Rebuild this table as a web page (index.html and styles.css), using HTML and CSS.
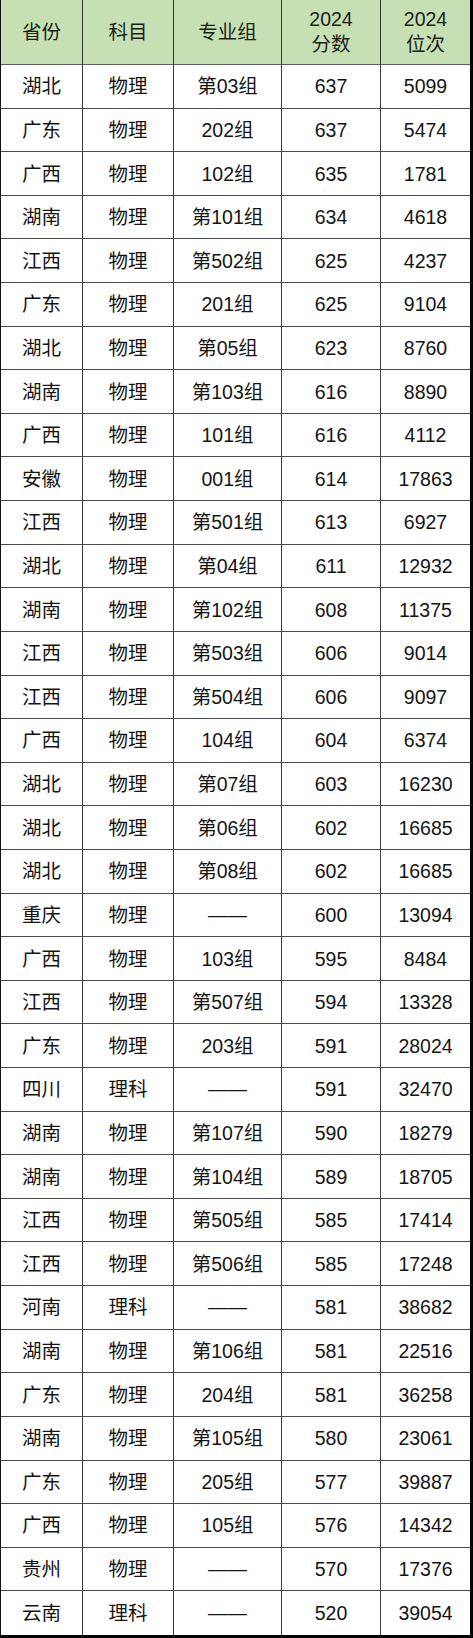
FILE: index.html
```html
<!DOCTYPE html>
<html lang="zh-CN">
<head>
<meta charset="utf-8">
<title>2024 分数位次</title>
<link rel="stylesheet" href="styles.css">
</head>
<body>
<div class="sheet">
  <div class="cell head">省份</div><div class="cell head">科目</div><div class="cell head">专业组</div><div class="cell head">2024<br>分数</div><div class="cell head last">2024<br>位次</div>
  <div class="cell">湖北</div><div class="cell">物理</div><div class="cell">第03组</div><div class="cell">637</div><div class="cell last">5099</div>
  <div class="cell">广东</div><div class="cell">物理</div><div class="cell">202组</div><div class="cell">637</div><div class="cell last">5474</div>
  <div class="cell">广西</div><div class="cell">物理</div><div class="cell">102组</div><div class="cell">635</div><div class="cell last">1781</div>
  <div class="cell">湖南</div><div class="cell">物理</div><div class="cell">第101组</div><div class="cell">634</div><div class="cell last">4618</div>
  <div class="cell">江西</div><div class="cell">物理</div><div class="cell">第502组</div><div class="cell">625</div><div class="cell last">4237</div>
  <div class="cell">广东</div><div class="cell">物理</div><div class="cell">201组</div><div class="cell">625</div><div class="cell last">9104</div>
  <div class="cell">湖北</div><div class="cell">物理</div><div class="cell">第05组</div><div class="cell">623</div><div class="cell last">8760</div>
  <div class="cell">湖南</div><div class="cell">物理</div><div class="cell">第103组</div><div class="cell">616</div><div class="cell last">8890</div>
  <div class="cell">广西</div><div class="cell">物理</div><div class="cell">101组</div><div class="cell">616</div><div class="cell last">4112</div>
  <div class="cell">安徽</div><div class="cell">物理</div><div class="cell">001组</div><div class="cell">614</div><div class="cell last">17863</div>
  <div class="cell">江西</div><div class="cell">物理</div><div class="cell">第501组</div><div class="cell">613</div><div class="cell last">6927</div>
  <div class="cell">湖北</div><div class="cell">物理</div><div class="cell">第04组</div><div class="cell">611</div><div class="cell last">12932</div>
  <div class="cell">湖南</div><div class="cell">物理</div><div class="cell">第102组</div><div class="cell">608</div><div class="cell last">11375</div>
  <div class="cell">江西</div><div class="cell">物理</div><div class="cell">第503组</div><div class="cell">606</div><div class="cell last">9014</div>
  <div class="cell">江西</div><div class="cell">物理</div><div class="cell">第504组</div><div class="cell">606</div><div class="cell last">9097</div>
  <div class="cell">广西</div><div class="cell">物理</div><div class="cell">104组</div><div class="cell">604</div><div class="cell last">6374</div>
  <div class="cell">湖北</div><div class="cell">物理</div><div class="cell">第07组</div><div class="cell">603</div><div class="cell last">16230</div>
  <div class="cell">湖北</div><div class="cell">物理</div><div class="cell">第06组</div><div class="cell">602</div><div class="cell last">16685</div>
  <div class="cell">湖北</div><div class="cell">物理</div><div class="cell">第08组</div><div class="cell">602</div><div class="cell last">16685</div>
  <div class="cell">重庆</div><div class="cell">物理</div><div class="cell">——</div><div class="cell">600</div><div class="cell last">13094</div>
  <div class="cell">广西</div><div class="cell">物理</div><div class="cell">103组</div><div class="cell">595</div><div class="cell last">8484</div>
  <div class="cell">江西</div><div class="cell">物理</div><div class="cell">第507组</div><div class="cell">594</div><div class="cell last">13328</div>
  <div class="cell">广东</div><div class="cell">物理</div><div class="cell">203组</div><div class="cell">591</div><div class="cell last">28024</div>
  <div class="cell">四川</div><div class="cell">理科</div><div class="cell">——</div><div class="cell">591</div><div class="cell last">32470</div>
  <div class="cell">湖南</div><div class="cell">物理</div><div class="cell">第107组</div><div class="cell">590</div><div class="cell last">18279</div>
  <div class="cell">湖南</div><div class="cell">物理</div><div class="cell">第104组</div><div class="cell">589</div><div class="cell last">18705</div>
  <div class="cell">江西</div><div class="cell">物理</div><div class="cell">第505组</div><div class="cell">585</div><div class="cell last">17414</div>
  <div class="cell">江西</div><div class="cell">物理</div><div class="cell">第506组</div><div class="cell">585</div><div class="cell last">17248</div>
  <div class="cell">河南</div><div class="cell">理科</div><div class="cell">——</div><div class="cell">581</div><div class="cell last">38682</div>
  <div class="cell">湖南</div><div class="cell">物理</div><div class="cell">第106组</div><div class="cell">581</div><div class="cell last">22516</div>
  <div class="cell">广东</div><div class="cell">物理</div><div class="cell">204组</div><div class="cell">581</div><div class="cell last">36258</div>
  <div class="cell">湖南</div><div class="cell">物理</div><div class="cell">第105组</div><div class="cell">580</div><div class="cell last">23061</div>
  <div class="cell">广东</div><div class="cell">物理</div><div class="cell">205组</div><div class="cell">577</div><div class="cell last">39887</div>
  <div class="cell">广西</div><div class="cell">物理</div><div class="cell">105组</div><div class="cell">576</div><div class="cell last">14342</div>
  <div class="cell">贵州</div><div class="cell">物理</div><div class="cell">——</div><div class="cell">570</div><div class="cell last">17376</div>
  <div class="cell bottom">云南</div><div class="cell bottom">理科</div><div class="cell bottom">——</div><div class="cell bottom">520</div><div class="cell bottom last">39054</div>
</div>
</body>
</html>
```

FILE: styles.css
```css
html, body {
  margin: 0;
  padding: 0;
  background: #ffffff;
}

.sheet {
  box-sizing: border-box;
  width: 473px;
  height: 1638px;
  display: grid;
  grid-template-columns: 82px 91px 108px 99px 1fr;
  grid-template-rows: 65px repeat(36, 1fr);
  border-left: 1px solid #111;
  border-right: 3px solid #000;
  border-bottom: 3px solid #000;
  font-family: "Liberation Sans", "Noto Sans CJK SC", sans-serif;
  font-size: 19.5px;
  color: #141414;
}

.cell {
  box-sizing: border-box;
  display: flex;
  align-items: center;
  justify-content: center;
  text-align: center;
  border-right: 1px solid #3c3c3c;
  border-bottom: 1px solid #4a4a4a;
  line-height: 24px;
}

.head {
  background: #c6e0b4;
  border-right-color: #2f3a2c;
  border-bottom-color: #5a5f58;
  line-height: 25px;
  color: #1a1f18;
}

.last {
  border-right: none;
}

.bottom {
  border-bottom: none;
}
```
